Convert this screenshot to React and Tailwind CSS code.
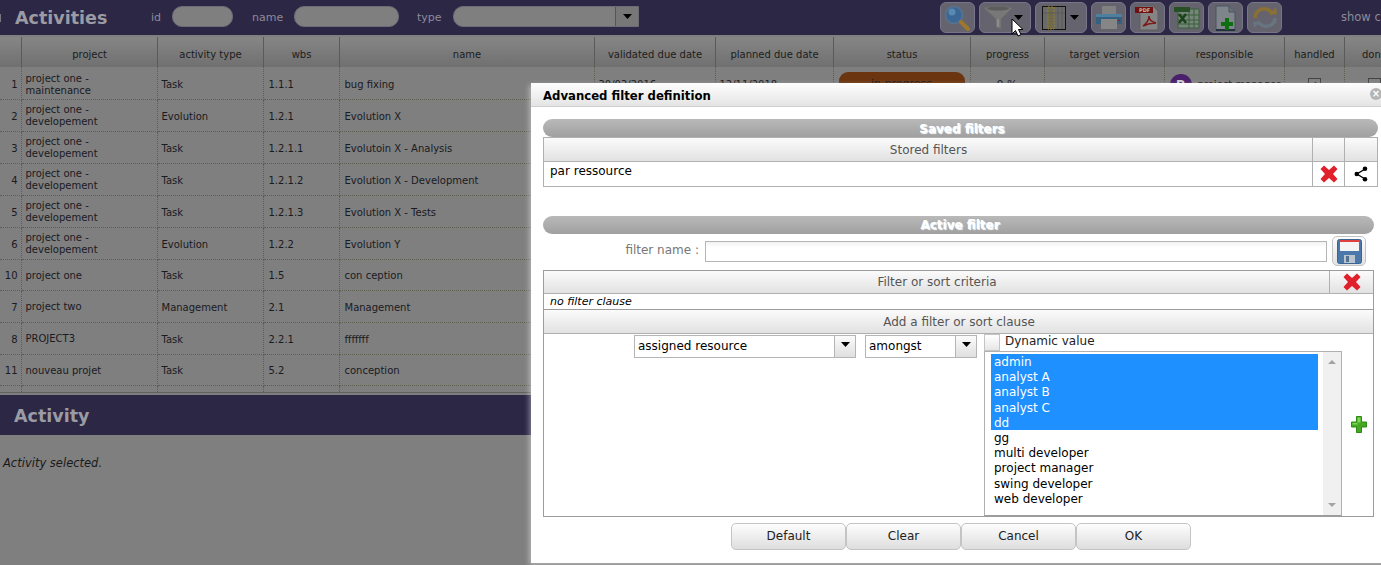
import React from "react";

const font = { fontFamily: '"DejaVu Sans", Verdana, sans-serif' };

const columns = [21, 136, 106, 76, 255, 121, 118, 137, 74, 120, 120, 60, 60];
const headers = ["", "project", "activity type", "wbs", "name", "validated due date", "planned due date", "status", "progress", "target version", "responsible", "handled", "done"];

const rows = [
  ["1", "project one - maintenance", "Task", "1.1.1", "bug fixing"],
  ["2", "project one - developement", "Evolution", "1.2.1", "Evolution X"],
  ["3", "project one - developement", "Task", "1.2.1.1", "Evolutoin X - Analysis"],
  ["4", "project one - developement", "Task", "1.2.1.2", "Evolution X - Development"],
  ["5", "project one - developement", "Task", "1.2.1.3", "Evolution X - Tests"],
  ["6", "project one - developement", "Evolution", "1.2.2", "Evolution Y"],
  ["10", "project one", "Task", "1.5", "con ception"],
  ["7", "project two", "Management", "2.1", "Management"],
  ["8", "PROJECT3", "Task", "2.2.1", "fffffff"],
  ["11", "nouveau projet", "Task", "5.2", "conception"],
  ["", "", "", "", ""],
];

const rowHeights = [32, 32, 32, 32, 32, 32, 31, 32, 32, 31, 32];

const resources = ["admin", "analyst A", "analyst B", "analyst C", "dd", "gg", "multi developer", "project manager", "swing developer", "web developer"];

const ToolButton = ({ children, className = "w-[35px] justify-center" }) => (
  <div className={`flex h-[31px] shrink-0 items-center rounded-[6px] border border-[#77758a] bg-[#65636e] ${className}`}>
    {children}
  </div>
);

const Caret = () => (
  <svg width="9" height="5" viewBox="0 0 9 5"><path d="M0 0h9L4.5 5z" fill="#000" /></svg>
);

const SearchIcon = () => (
  <svg width="27" height="26" viewBox="0 0 27 26">
    <circle cx="10" cy="10" r="8.5" fill="#3a6796" stroke="#56718c" strokeWidth="2" />
    <circle cx="8" cy="7" r="3.5" fill="#5b88b0" />
    <path d="M17 17l7 7" stroke="#9c772c" strokeWidth="4" strokeLinecap="round" />
  </svg>
);

const FunnelIcon = () => (
  <svg width="30" height="25" viewBox="0 0 30 25">
    <path d="M1 3Q15 -1 29 3L18 14V24L13 22V14Z" fill="#787878" stroke="#6c6c6c" />
    <ellipse cx="15" cy="3.5" rx="11" ry="2" fill="#5c5c5c" />
    <path d="M14 14h2v8h-2z" fill="#8c8c8c" />
  </svg>
);

const ColumnsIcon = () => (
  <svg width="24" height="24" viewBox="0 0 24 24">
    <rect x="0.5" y="0.5" width="23" height="23" fill="#6a6a6a" stroke="#111" />
    <rect x="6" y="1" width="6" height="22" fill="#6f6a4c" stroke="#947f2a" strokeDasharray="2 1" />
    <path d="M16 1v22M20 1v22M1 7h22" stroke="#5a5a5a" strokeWidth="1" />
  </svg>
);

const PrinterIcon = () => (
  <svg width="28" height="25" viewBox="0 0 28 25">
    <rect x="7" y="1" width="14" height="8" fill="#808080" />
    <path d="M1 9h26v10H1z" fill="#35607f" />
    <rect x="1" y="9" width="26" height="3" fill="#4f7f9e" />
    <path d="M6 14h16v10H6z" fill="#868686" />
    <rect x="23" y="15" width="2" height="1" fill="#802020" />
  </svg>
);

const PdfIcon = () => (
  <svg width="25" height="26" viewBox="0 0 25 26">
    <path d="M5 1h13l5 5v19H5z" fill="#848484" stroke="#5e5e5e" />
    <rect x="0" y="2" width="18" height="6" fill="#701212" />
    <text x="4" y="7" fontSize="5" fontWeight="700" fill="#bbb" style={font}>PDF</text>
    <path d="M8 21c4-3 6-7 6-10 0 4 3 6 7 7-4 0-9 1-13 3z" fill="none" stroke="#7c1a1a" strokeWidth="1.5" />
  </svg>
);

const ExcelIcon = () => (
  <svg width="26" height="22" viewBox="0 0 26 22">
    <path d="M4 2h21v19H4z" fill="#76857a" stroke="#3a5f3a" />
    <path d="M4 8h21M4 13h21M4 17h21M15 2v19M20 2v19" stroke="#3a5f3a" />
    <rect x="0" y="0" width="16" height="5" fill="#264f26" />
    <path d="M5 7l7 9M12 7l-7 9" stroke="#194219" strokeWidth="2.5" />
  </svg>
);

const NewDocIcon = () => (
  <svg width="21" height="26" viewBox="0 0 21 26">
    <path d="M1 1h13l6 6v18H1z" fill="#7f858a" stroke="#4a5560" />
    <path d="M14 1v6h6" fill="#696e73" stroke="#4a5560" />
    <path d="M1 25h19" stroke="#123" strokeWidth="1.5" />
    <path d="M10 13h4v4h4v4h-4v4h-4v-4H6v-4h4z" fill="#0f6e0f" />
  </svg>
);

const RefreshIcon = () => (
  <svg width="26" height="23" viewBox="0 0 26 23" fill="none">
    <path d="M3 12C3 6 8 2 14 3c2.5.5 4.5 2 6 4" stroke="#8a7035" strokeWidth="3.5" />
    <path d="M17 9l8-1-1-7z" fill="#8a7035" />
    <path d="M23 12c0 6-5 9-11 8-2.5-.5-4.500-2-6-4" stroke="#66757f" strokeWidth="3.5" />
    <path d="M9 15l-8 1 1 6z" fill="#66757f" />
  </svg>
);

const RedCross = () => (
  <svg width="18" height="18" viewBox="0 0 18 18">
    <path d="M4 0.5L9 5l5-4.5 3.5 3.500L13 9l4.500 5-3.500 3.500L9 13l-5 4.500L0.500 14 5 9 .5 4z" fill="#e0202a" />
  </svg>
);

const ShareIcon = () => (
  <svg width="14" height="16" viewBox="0 0 14 16">
    <path d="M11 3L3 8l8 5" fill="none" stroke="#000" strokeWidth="1.4" />
    <circle cx="11" cy="2.8" r="2.3" fill="#000" />
    <circle cx="2.800" cy="8" r="2.3" fill="#000" />
    <circle cx="11" cy="13.2" r="2.3" fill="#000" />
  </svg>
);

const SaveIcon = () => (
  <svg width="25" height="25" viewBox="0 0 25 25">
    <rect x="0.5" y="0.5" width="24" height="24" rx="2" fill="#4a78ab" stroke="#3a6494" />
    <rect x="3" y="1" width="19" height="11" fill="#f4f4f4" />
    <rect x="3" y="1" width="19" height="2" fill="#e04040" />
    <rect x="7" y="16" width="11" height="8" fill="#b9c4cf" />
    <rect x="9" y="17" width="3" height="6" fill="#54718f" />
  </svg>
);

const PlusIcon = () => (
  <svg width="16" height="17" viewBox="0 0 16 17">
    <path d="M5.500.5h5v5.500h5v5h-5v5.500h-5V11h-5V6h5z" fill="#44a821" stroke="#2e8a14" />
    <path d="M6.500 1.500h3v5h-3zM1.500 7h5v1.500h-5z" fill="#7fd65a" />
  </svg>
);

const Cursor = () => (
  <svg className="absolute left-[1011px] top-[18px]" width="13" height="20" viewBox="0 0 13 20">
    <path d="M1 1v15l3.500-3.500L7 18l3-1.300-2.500-5.200H12z" fill="#fff" stroke="#000" />
  </svg>
);

const Pill = ({ children, className = "" }) => (
  <div className={`flex h-[18px] w-full items-center justify-center rounded-[9px] bg-gradient-to-b from-[#b9b9b9] to-[#a0a0a0] pl-[3px] text-[12px] font-bold text-white [text-shadow:1px_1px_1px_#fff] ${className}`}>
    {children}
  </div>
);

const GridHeader = ({ children, className = "" }) => (
  <div className={`flex items-center justify-center bg-gradient-to-b from-[#fbfbfb] to-[#e2e2e2] pl-[1px] text-[12px] text-[#555] ${className}`}>
    {children}
  </div>
);

const SelectBox = ({ value, width, className = "" }) => (
  <div className={`flex h-[23px] items-stretch border border-[#b5b5b5] bg-white ${width} ${className}`}>
    <div className="flex-1 overflow-hidden pl-[3px] text-[12px] leading-[21px] text-black">{value}</div>
    <div className="flex w-[21px] items-center justify-center border-l border-[#b5b5b5] bg-gradient-to-b from-[#fbfbfb] to-[#dfdfdf] pb-[4px]">
      <Caret />
    </div>
  </div>
);

const FooterButton = ({ label }) => (
  <button className="h-[27px] w-[115px] rounded-[5px] border border-[#c4c4c4] bg-gradient-to-b from-[#fdfdfd] to-[#dedede] pb-[2px] pl-[1px] text-[12px] text-[#222]">
    {label}
  </button>
);

const FilterDialog = () => (
  <div className="absolute left-[531px] top-[83px] h-[480px] w-[860px] bg-white shadow-[-2px_2px_5px_rgba(255,255,255,0.4)]">
    <div className="flex h-[24px] items-center border-b border-[#d0d0d0] bg-gradient-to-b from-[#fefefe] to-[#e4e4e4] pl-[12px] pt-[4px]">
      <span className="text-[11.7px] font-bold text-black">Advanced filter definition</span>
    </div>
    <div className="absolute left-[839px] top-[5px] flex h-[12px] w-[12px] items-center justify-center rounded-full bg-[#b4b4b4] text-[10px] font-bold leading-none text-white">×</div>

    <div className="ml-[12px] mt-[12px] w-[835px]">
      <Pill className="pt-[1px]">Saved filters</Pill>
      <div className="border border-[#b0b0b0]">
        <div className="flex h-[24px] border-b border-[#b0b0b0]">
          <GridHeader className="flex-1">Stored filters</GridHeader>
          <GridHeader className="w-[32px] border-l border-[#b0b0b0]" />
          <GridHeader className="w-[33px] border-l border-[#b0b0b0]" />
        </div>
        <div className="flex h-[24px]">
          <div className="flex-1 pl-[6px] text-[12px] leading-[18px] text-black">par ressource</div>
          <div className="flex w-[32px] items-center justify-center border-l border-[#b0b0b0]"><RedCross /></div>
          <div className="flex w-[33px] items-center justify-center border-l border-[#b0b0b0]"><ShareIcon /></div>
        </div>
      </div>
    </div>

    <div className="ml-[12px] mt-[29px] w-[831px]">
      <Pill>Active filter</Pill>
      <div className="flex h-[36px] items-center pb-[2px]">
        <label className="w-[160px] pb-[2px] pr-[4px] text-right text-[12px] text-[#777]">filter name :</label>
        <div className="ml-[2px] h-[21px] w-[622px] border border-[#b5b5b5] bg-gradient-to-b from-[#f2f2f2] to-white to-30%" />
        <div className="ml-[5px] flex h-[30px] w-[34px] items-center justify-center rounded-[5px] border border-[#c4c4c4] bg-gradient-to-b from-[#fdfdfd] to-[#e2e2e2]"><SaveIcon /></div>
      </div>
      <div className="border border-[#9c9c9c]">
        <div className="flex h-[23px] border-b border-[#b0b0b0]">
          <GridHeader className="flex-1">Filter or sort criteria</GridHeader>
          <GridHeader className="w-[44px] border-l border-[#b0b0b0]"><RedCross /></GridHeader>
        </div>
        <div className="h-[16px] border-b border-[#9c9c9c] pl-[6px] text-[11px] italic leading-[15px] text-black">no filter clause</div>
        <GridHeader className="h-[24px] border-b border-[#b0b0b0]">Add a filter or sort clause</GridHeader>
        <div className="flex h-[182px]">
          <div className="flex items-start pl-[90px] pt-[1px]">
            <SelectBox value="assigned resource" width="w-[222px]" />
            <SelectBox value="amongst" width="w-[112px]" className="ml-[9px]" />
          </div>
          <div className="ml-[7px] w-[358px]">
            <div className="flex h-[17px] items-start">
              <div className="h-[17px] w-[16px] border border-[#c4c4c4] bg-gradient-to-b from-[#fff] to-[#e6e6e6]" />
              <span className="ml-[5px] text-[12px] leading-[15px] text-[#222]">Dynamic value</span>
            </div>
            <div className="flex h-[165px] border border-[#b0b0b0] border-b-[#9c9c9c]">
              <div className="flex-1 pl-[6px] pr-[5px] pt-[2px]">
                {resources.map((r, i) => (
                  <div key={r} className={`h-[15.2px] pl-[3px] text-[12px] leading-[17px] ${i < 5 ? "bg-[#1e90ff] text-white" : "text-black"}`}>{r}</div>
                ))}
              </div>
              <div className="flex w-[18px] flex-col items-center justify-between bg-[#f0f0f0] py-[8px]">
                <svg width="8" height="4" viewBox="0 0 8 4"><path d="M0 4h8L4 0z" fill="#a3a3a3" /></svg>
                <svg width="8" height="4" viewBox="0 0 8 4"><path d="M0 0h8L4 4z" fill="#a3a3a3" /></svg>
              </div>
            </div>
          </div>
          <div className="flex flex-1 items-center justify-center pb-[2px] pl-[2px]"><PlusIcon /></div>
        </div>
      </div>
    </div>

    <div className="mt-[6px] flex justify-center">
      <div className="ml-[-1px] flex">
        <FooterButton label="Default" />
        <FooterButton label="Clear" />
        <FooterButton label="Cancel" />
        <FooterButton label="OK" />
      </div>
    </div>
  </div>
);

const App = () => {
  return (
    <div className="relative h-[565px] w-full overflow-hidden bg-[#7f7f7f]" style={font}>
      {/* top bar */}
      <div className="flex h-[35px] items-center whitespace-nowrap bg-[#2c2745] text-[11px] text-[#8d8b98]">
        <span className="h-[8px] w-[1px] shrink-0 bg-[#77757f]" />
        <span className="ml-[14px] w-[136px] shrink-0 pt-[2px] text-[17.5px] font-bold text-[#9b9ba3]">Activities</span>
        <span className="w-[21px] shrink-0 pt-[2px]">id</span>
        <div className="mb-[2px] h-[21px] w-[61px] shrink-0 rounded-[10px] border border-[#6d6b78] bg-[#7f7f7f]" />
        <span className="ml-[19px] w-[42px] shrink-0 pt-[2px]">name</span>
        <div className="mb-[2px] h-[21px] w-[105px] shrink-0 rounded-[10px] border border-[#6d6b78] bg-[#7f7f7f]" />
        <span className="ml-[18px] w-[36px] shrink-0 pt-[2px]">type</span>
        <div className="mb-[2px] flex h-[21px] w-[186px] shrink-0 overflow-hidden rounded-l-[10px] border border-[#6d6b78] bg-[#7f7f7f]">
          <div className="flex-1" />
          <div className="flex w-[23px] items-center justify-center border-l border-[#555] bg-[#777]"><Caret /></div>
        </div>
        <div className="ml-[301px] flex shrink-0 items-center gap-[4px]">
          <ToolButton><SearchIcon /></ToolButton>
          <ToolButton className="w-[52px] gap-[1px] pl-[3px]"><FunnelIcon /><Caret /></ToolButton>
          <ToolButton className="w-[52px] gap-[4px] pl-[6px]"><ColumnsIcon /><Caret /></ToolButton>
          <ToolButton><PrinterIcon /></ToolButton>
          <ToolButton><PdfIcon /></ToolButton>
          <ToolButton><ExcelIcon /></ToolButton>
          <ToolButton><NewDocIcon /></ToolButton>
          <ToolButton><RefreshIcon /></ToolButton>
        </div>
        <span className="ml-[59px] shrink-0 text-[11.5px]">show closed</span>
      </div>

      {/* activities table */}
      <div className="mt-[2px] h-[356px] overflow-hidden border-b border-[#606060]">
        <table className="w-[1404px] table-fixed border-collapse text-[10px] text-[#1a1a22]">
          <colgroup>
            {columns.map((w, i) => <col key={i} style={{ width: w }} />)}
          </colgroup>
          <thead>
            <tr className="h-[30px] bg-gradient-to-b from-[#868686] to-[#707070]">
              {headers.map((h, i) => (
                <th key={i} className="border-r border-[#5a5a5a] pl-[1px] pt-[4px] text-center text-[10px] font-normal text-[#1c1c1c]">{h}</th>
              ))}
            </tr>
          </thead>
          <tbody>
            {rows.map((r, idx) => {
              const pad = idx === 0 ? "pt-[4px]" : "pt-[2px]";
              return (
                <tr key={idx} style={{ height: rowHeights[idx] }}>
                  <td className={`border-b border-r border-dotted border-[#5f5d4c] pr-[3px] text-right ${pad}`}>{r[0]}</td>
                  <td className={`border-b border-r border-dotted border-[#5f5d4c] pl-[4px] leading-[12px] ${pad}`}>{r[1]}</td>
                  <td className={`border-b border-r border-dotted border-[#5f5d4c] pl-[4px] ${pad}`}>{r[2]}</td>
                  <td className={`border-b border-r border-dotted border-[#5f5d4c] pl-[5px] ${pad}`}>{r[3]}</td>
                  <td className={`border-b border-r border-dotted border-[#5f5d4c] pl-[5px] ${pad}`}>{r[4]}</td>
                  <td className={`border-b border-r border-dotted border-[#5f5d4c] pl-[4px] ${pad}`}>{idx === 0 ? "30/03/2016" : ""}</td>
                  <td className={`border-b border-r border-dotted border-[#5f5d4c] pl-[4px] ${pad}`}>{idx === 0 ? "12/11/2018" : ""}</td>
                  <td className={`border-b border-r border-dotted border-[#5f5d4c] px-[5px] text-center ${pad}`}>
                    {idx === 0 && <div className="mt-[-2px] h-[24px] rounded-[9px] bg-[#6b3510] text-[11px] leading-[24px]">in progress</div>}
                  </td>
                  <td className={`border-b border-r border-dotted border-[#5f5d4c] text-center text-[11px] ${pad}`}>{idx === 0 ? "0 %" : ""}</td>
                  <td className="border-b border-r border-dotted border-[#5f5d4c]" />
                  <td className={`border-b border-r border-dotted border-[#5f5d4c] pl-[5px] ${pad}`}>
                    {idx === 0 && (
                      <div className="flex items-center gap-[6px]">
                        <div className="flex h-[22px] w-[22px] items-center justify-center rounded-full bg-[#4a1f6b] text-[12px] font-bold text-[#ccc]">P</div>
                        <span>project manager</span>
                      </div>
                    )}
                  </td>
                  <td className={`border-b border-r border-dotted border-[#5f5d4c] text-center ${pad}`}>
                    {idx === 0 && <div className="mx-auto flex h-[13px] w-[13px] items-center justify-center border border-[#444] text-[10px] leading-none">✓</div>}
                  </td>
                  <td className={`border-b border-r border-dotted border-[#5f5d4c] ${pad}`}>
                    {idx === 0 && <div className="mx-auto h-[13px] w-[13px] border border-[#444]" />}
                  </td>
                </tr>
              );
            })}
          </tbody>
        </table>
      </div>

      {/* detail panel */}
      <div className="mt-[2px] flex h-[40px] items-center bg-[#2c2745] pl-[14px] pt-[2px] text-[17.5px] font-bold text-[#9b9ba3]">Activity</div>
      <div className="mt-[20px] pl-[3px] text-[11.5px] italic text-[#1a1a1a]">Activity selected.</div>

      <FilterDialog />
      <Cursor />
    </div>
  );
};

export default App;
